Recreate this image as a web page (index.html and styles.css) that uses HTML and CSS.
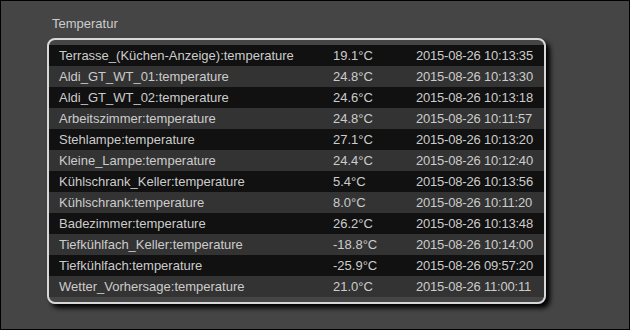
FILE: index.html
```html
<!DOCTYPE html>
<html>
<head>
<meta charset="utf-8">
<link rel="stylesheet" href="styles.css">
</head>
<body>
<div class="page">
  <div class="title">Temperatur</div>
  <div class="block">
    <table class="readings">
      <colgroup><col class="c-name"><col class="c-val"><col class="c-time"></colgroup>
      <tr><td>Terrasse_(Küchen-Anzeige):temperature</td><td>19.1°C</td><td class="time">2015-08-26 10:13:35</td></tr>
      <tr><td>Aldi_GT_WT_01:temperature</td><td>24.8°C</td><td class="time">2015-08-26 10:13:30</td></tr>
      <tr><td>Aldi_GT_WT_02:temperature</td><td>24.6°C</td><td class="time">2015-08-26 10:13:18</td></tr>
      <tr><td>Arbeitszimmer:temperature</td><td>24.8°C</td><td class="time">2015-08-26 10:11:57</td></tr>
      <tr><td>Stehlampe:temperature</td><td>27.1°C</td><td class="time">2015-08-26 10:13:20</td></tr>
      <tr><td>Kleine_Lampe:temperature</td><td>24.4°C</td><td class="time">2015-08-26 10:12:40</td></tr>
      <tr><td>Kühlschrank_Keller:temperature</td><td>5.4°C</td><td class="time">2015-08-26 10:13:56</td></tr>
      <tr><td>Kühlschrank:temperature</td><td>8.0°C</td><td class="time">2015-08-26 10:11:20</td></tr>
      <tr><td>Badezimmer:temperature</td><td>26.2°C</td><td class="time">2015-08-26 10:13:48</td></tr>
      <tr><td>Tiefkühlfach_Keller:temperature</td><td>-18.8°C</td><td class="time">2015-08-26 10:14:00</td></tr>
      <tr><td>Tiefkühlfach:temperature</td><td>-25.9°C</td><td class="time">2015-08-26 09:57:20</td></tr>
      <tr><td>Wetter_Vorhersage:temperature</td><td>21.0°C</td><td class="time">2015-08-26 11:00:11</td></tr>
    </table>
  </div>
</div>
</body>
</html>
```
FILE: styles.css
```css
html, body {
  margin: 0;
  padding: 0;
  background: #444;
}
.page {
  box-sizing: border-box;
  width: 630px;
  height: 330px;
  border: 1px solid #000;
  background: #454545;
  padding: 15px 0 0 46px;
  font-family: "Liberation Sans", Arial, sans-serif;
  font-size: 13px;
  color: #ccc;
}
.title {
  line-height: 16px;
  padding-left: 5px;
  margin-bottom: 6px;
}
.block {
  width: 495px;
  border: 2px solid #d8d8d8;
  border-radius: 8px;
  padding: 5px 0;
  box-shadow: 4px 4px 5px #000;
}
.readings {
  width: 495px;
  table-layout: fixed;
  border-collapse: collapse;
  border-spacing: 0;
}
.c-name { width: 274px; }
.c-val { width: 83px; }
.c-time { width: 138px; }
.readings td {
  height: 21px;
  line-height: 21px;
  padding: 0 0 0 10px;
  white-space: nowrap;
  overflow: hidden;
}
.readings td.time {
  letter-spacing: -0.2px;
}
.readings tr:nth-child(odd) { background: #111; }
.readings tr:nth-child(even) { background: #333; }
```
